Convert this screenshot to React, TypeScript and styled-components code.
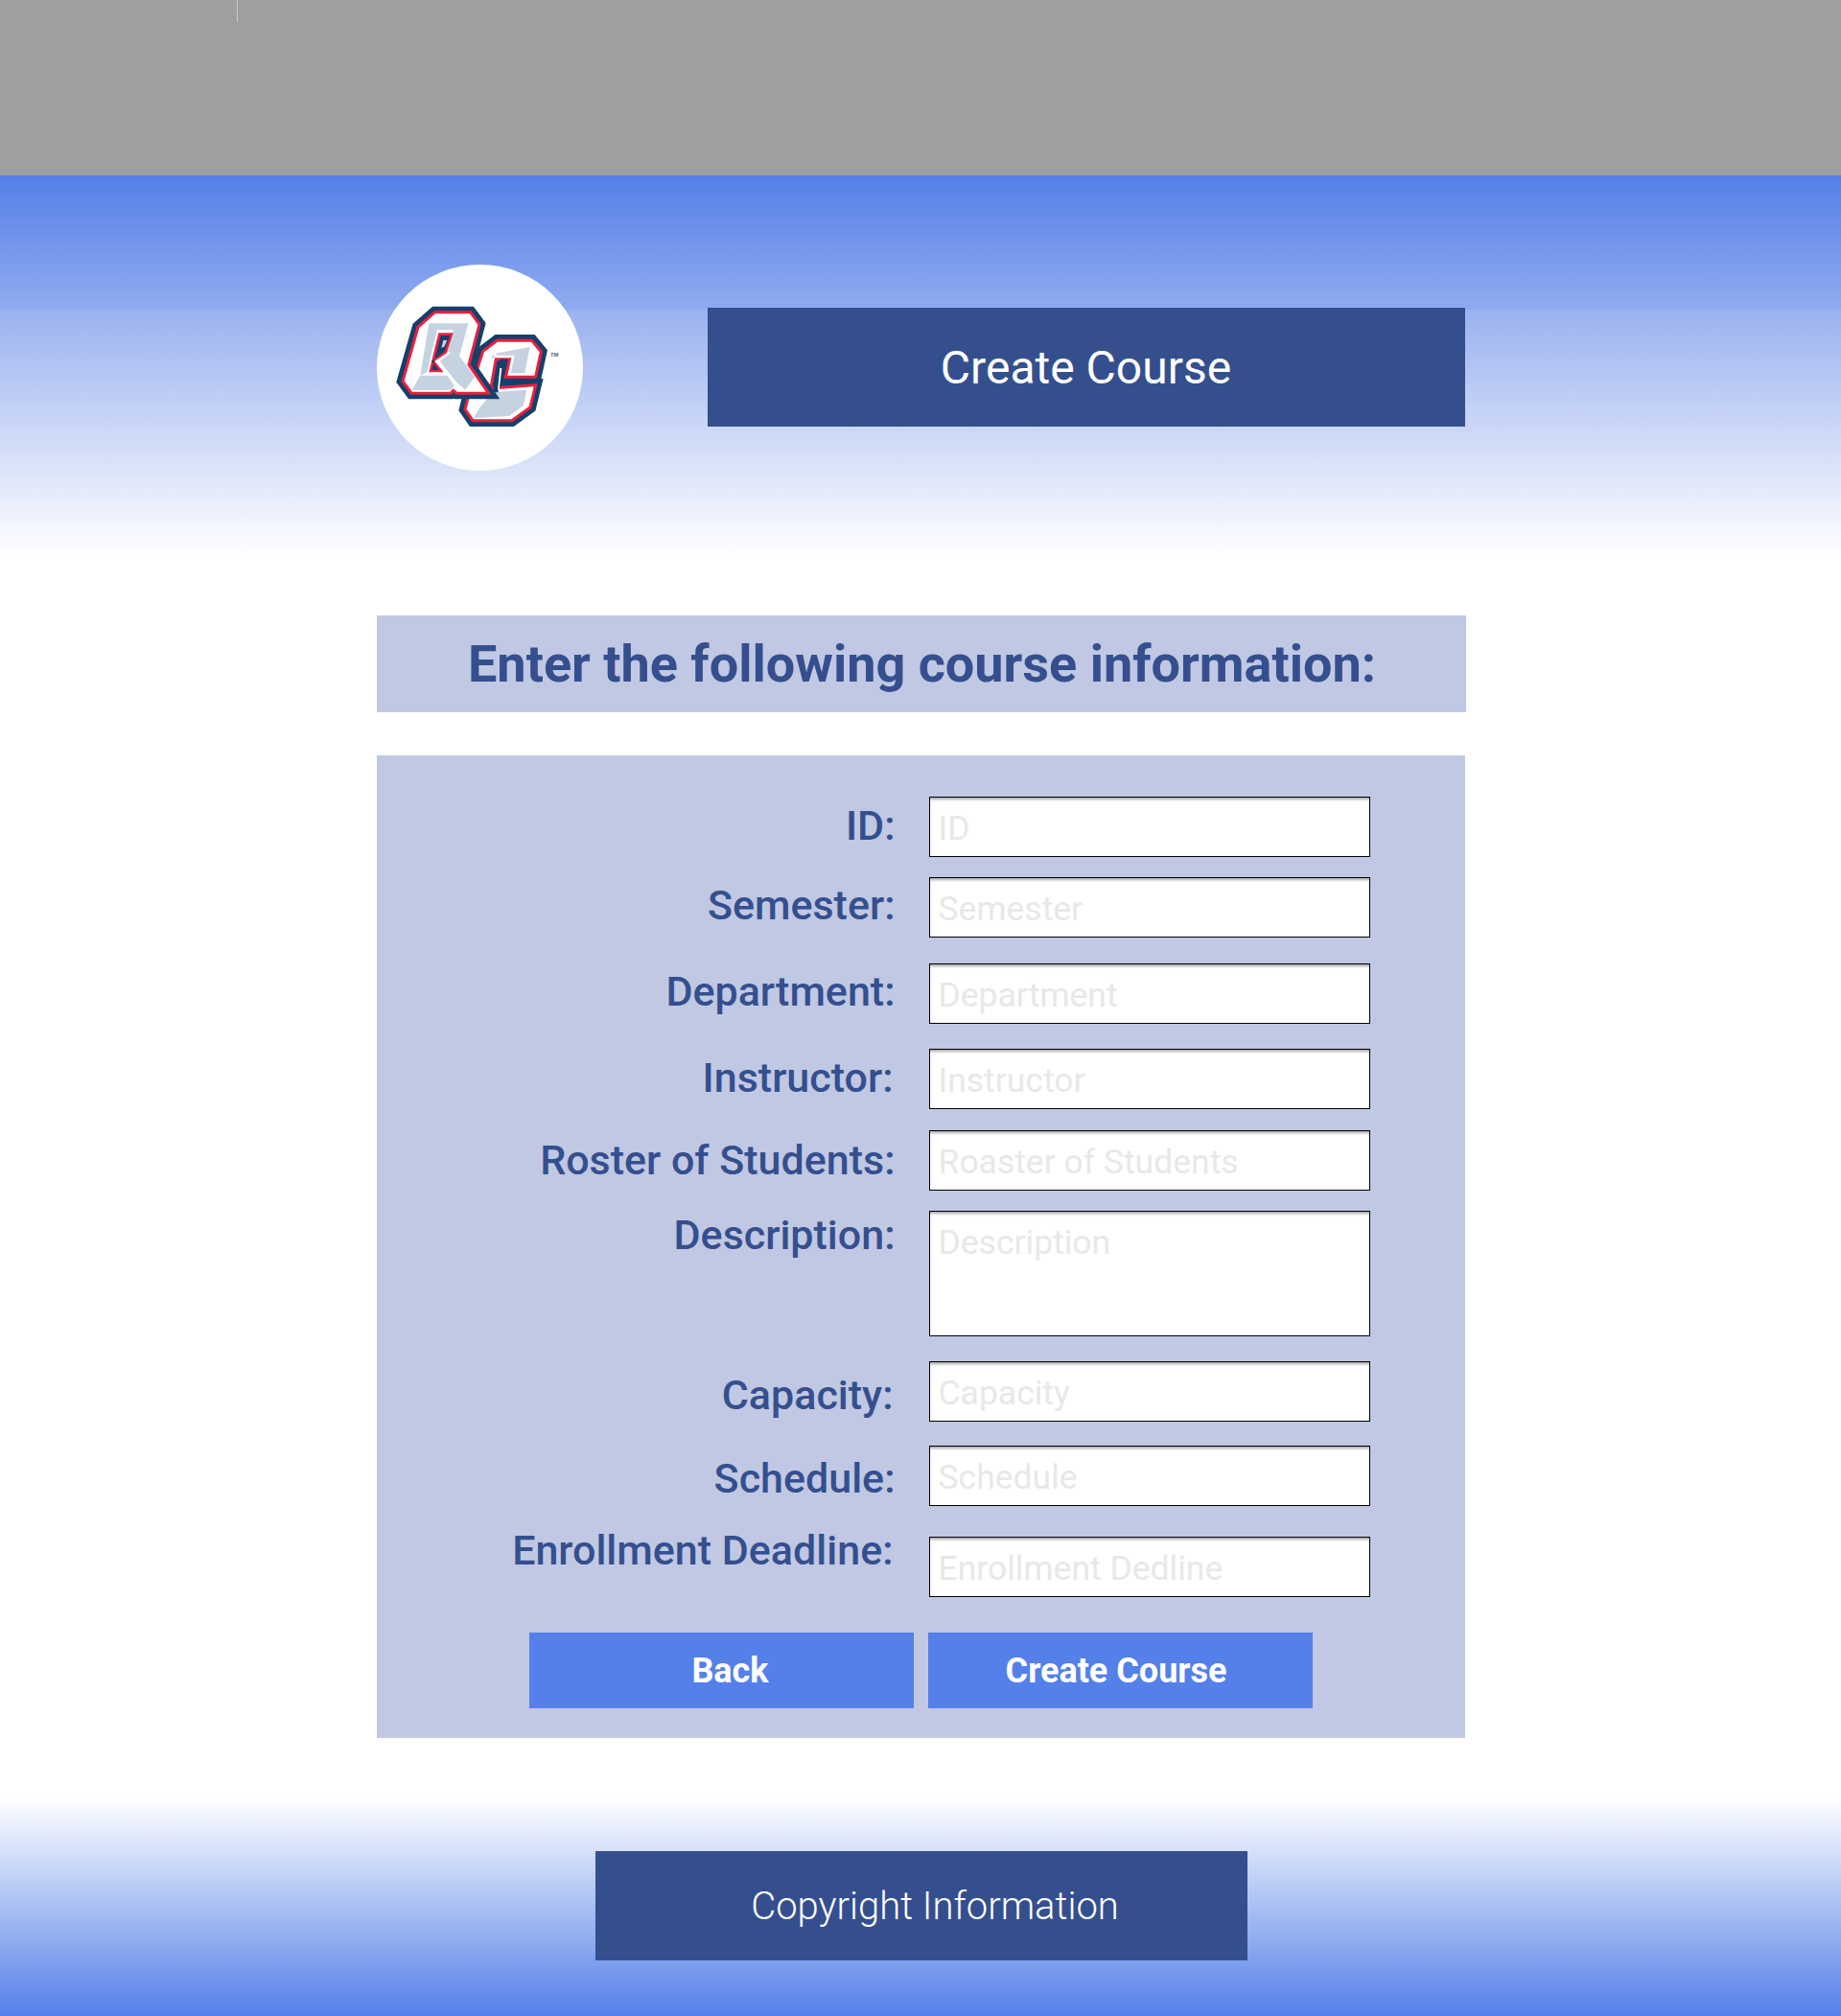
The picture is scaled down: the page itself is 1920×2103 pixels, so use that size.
import React from "react";
import styled, { createGlobalStyle } from "styled-components";

const GlobalStyle = createGlobalStyle`
  html, body {
    margin: 0;
    padding: 0;
    background: #ffffff;
    font-family: Roboto, "Liberation Sans", sans-serif;
  }
  * { box-sizing: border-box; }
`;

type Field = {
  label: string;
  placeholder: string;
  top: number;
  labelTop: number;
  labelRight?: number;
  multiline?: boolean;
};

const fields: Field[] = [
  { label: "ID:", placeholder: "ID", top: 0, labelTop: 5 },
  { label: "Semester:", placeholder: "Semester", top: 21, labelTop: 4 },
  { label: "Department:", placeholder: "Department", top: 27, labelTop: 4 },
  { label: "Instructor:", placeholder: "Instructor", top: 26, labelTop: 5, labelRight: 2 },
  { label: "Roster of Students:", placeholder: "Roaster of Students", top: 22, labelTop: 6 },
  { label: "Description:", placeholder: "Description", top: 21, labelTop: 0, multiline: true },
  { label: "Capacity:", placeholder: "Capacity", top: 26, labelTop: 10, labelRight: 2 },
  { label: "Schedule:", placeholder: "Schedule", top: 25, labelTop: 9 },
  { label: "Enrollment Deadline:", placeholder: "Enrollment Dedline", top: 32, labelTop: -11, labelRight: 2 },
];

const NAVY = "#173f6b";
const RED = "#e8213f";
const STEEL = "#c5d3e0";

function Logo() {
  const q = "M202 246 L252 202 L360 202 L385 236 L352 362 L410 446 L320 446 L308 436 L298 446 L180 446 L155 412 Z";
  const c =
    "M405 322 L447 290 L552 290 L578 322 L562 395 L478 395 L490 340 L438 340 L420 440 L560 430 L545 492 L490 532 L372 532 L350 500 L360 460 Z";
  return (
    <svg width="215" height="215" viewBox="69 48 645 645" aria-label="QC logo">
      <path d={c} fill="#fff" stroke={NAVY} strokeWidth="46" strokeLinejoin="miter" />
      <path d={c} fill="#fff" stroke={RED} strokeWidth="18" strokeLinejoin="miter" />
      <path d={c} fill="#fff" />
      <polygon points="428,345 447,325 548,306 532,388 488,388 500,332 430,332" fill={STEEL} />
      <polygon points="372,528 392,494 432,448 538,440 528,488 484,522" fill={STEEL} />
      <polygon points="455,344 480,344 462,392 448,448 432,448" fill={NAVY} />
      <polygon points="454,372 460,372 452,440 447,440" fill="#ffffff" />
      <path d={q} fill="#fff" stroke={NAVY} strokeWidth="46" strokeLinejoin="miter" />
      <path d={q} fill="#fff" stroke={RED} strokeWidth="18" strokeLinejoin="miter" />
      <path d={q} fill="#fff" />
      <polygon points="232,232 355,232 326,340 292,320 308,252 258,252 226,385 205,395" fill={STEEL} />
      <polygon points="178,441 205,395 290,395 312,428 298,441" fill={STEEL} />
      <polygon points="300,325 328,335 376,400 345,440 318,416 266,350" fill={STEEL} />
      <polygon points="262,262 308,262 288,325 250,350 278,385 232,385" fill={RED} />
      <polygon points="269,270 298,270 281,320 240,350 264,378 241,378" fill={NAVY} />
      <polygon points="277,285 289,285 280,305 271,308" fill={STEEL} />
      <text x="612" y="335" fontSize="17" fontStyle="italic" fontWeight="700" fill="#54657a" fontFamily="Roboto, sans-serif">
        TM
      </text>
    </svg>
  );
}

export default function App() {
  return (
    <>
      <GlobalStyle />
      <Page>
        <TopBar>
          <TopTick />
        </TopBar>
        <Header>
          <HeaderInner>
            <LogoCircle>
              <Logo />
            </LogoCircle>
            <TitleBar>Create Course</TitleBar>
          </HeaderInner>
        </Header>
        <Main>
          <Heading>Enter the following course information:</Heading>
          <FormPanel>
            {fields.map((f) => (
              <Row key={f.label} $top={f.top}>
                <Label $top={f.labelTop} $right={f.labelRight ?? 0}>
                  {f.label}
                </Label>
                {f.multiline ? (
                  <TextBox placeholder={f.placeholder} />
                ) : (
                  <TextInput placeholder={f.placeholder} />
                )}
              </Row>
            ))}
            <ButtonRow>
              <ActionButton type="button" $left={19} $right={0}>
                Back
              </ActionButton>
              <ActionButton type="button" $left={0} $right={8}>
                Create Course
              </ActionButton>
            </ButtonRow>
          </FormPanel>
        </Main>
        <Footer>
          <FooterBar>Copyright Information</FooterBar>
        </Footer>
      </Page>
    </>
  );
}

const Page = styled.div`
  width: 1920px;
  height: 2103px;
  background: #ffffff;
  overflow: hidden;
`;

const TopBar = styled.div`
  position: relative;
  height: 183px;
  background: #9f9f9f;
`;

const TopTick = styled.span`
  position: absolute;
  left: 247px;
  top: 0;
  width: 1px;
  height: 23px;
  background: #c6c6c6;
`;

const Header = styled.header`
  height: 397px;
  background: linear-gradient(
    180deg,
    #5580e9 0,
    #90abef 140px,
    #9bb2f0 140px,
    #ffffff 100%
  );
`;

const HeaderInner = styled.div`
  width: 1135px;
  margin: 0 auto;
  display: flex;
  align-items: flex-start;
`;

const LogoCircle = styled.div`
  width: 215px;
  height: 215px;
  margin-top: 93px;
  border-radius: 50%;
  background: #ffffff;
  overflow: hidden;
  flex-shrink: 0;
`;

const TitleBar = styled.div`
  width: 790px;
  height: 124px;
  margin: 138px 0 0 130px;
  display: flex;
  align-items: center;
  justify-content: center;
  background: #354f8e;
  color: #ffffff;
  font-size: 48px;
  font-weight: 400;
`;

const Main = styled.main`
  width: 1135px;
  margin: 62px auto 0;
`;

const Heading = styled.h1`
  width: 1136px;
  height: 101px;
  margin: 0;
  padding-left: 2px;
  display: flex;
  align-items: center;
  justify-content: center;
  background: #c0c8e4;
  color: #354f8e;
  font-size: 54px;
  font-weight: 700;
`;

const FormPanel = styled.section`
  margin-top: 45px;
  height: 1025px;
  padding-top: 43px;
  background: #c0c8e4;
`;

const Row = styled.div<{ $top: number }>`
  display: flex;
  align-items: flex-start;
  margin-top: ${(p) => p.$top}px;
`;

const Label = styled.label<{ $top: number; $right: number }>`
  width: 576px;
  height: 50px;
  line-height: 50px;
  padding-right: ${(p) => 35 + p.$right}px;
  margin-top: ${(p) => p.$top}px;
  margin-bottom: ${(p) => -p.$top}px;
  text-align: right;
  color: #354f8e;
  font-size: 43px;
  font-weight: 500;
  white-space: nowrap;
`;

const fieldStyles = `
  width: 460px;
  display: block;
  padding: 2px 9px 0;
  border: 1px solid #000000;
  border-radius: 0;
  outline: none;
  background: #ffffff;
  box-shadow: inset 0 4px 3px -2px rgba(0, 0, 0, 0.35);
  font-family: Roboto, "Liberation Sans", sans-serif;
  font-size: 35.5px;
  color: #333333;
  resize: none;

  &::placeholder {
    color: #e8e8e8;
    opacity: 1;
  }
`;

const TextInput = styled.input`
  ${fieldStyles}
  height: 63px;
`;

const TextBox = styled.textarea`
  ${fieldStyles}
  height: 131px;
  padding-top: 11px;
  overflow: hidden;
`;

const ButtonRow = styled.div`
  display: flex;
  gap: 15px;
  margin: 37px 0 0 159px;
`;

const ActionButton = styled.button<{ $left: number; $right: number }>`
  width: 401px;
  height: 79px;
  padding: 0 ${(p) => p.$right}px 0 ${(p) => p.$left}px;
  border: none;
  background: #5580e9;
  color: #ffffff;
  font-family: Roboto, "Liberation Sans", sans-serif;
  font-size: 36px;
  font-weight: 700;
`;

const Footer = styled.footer`
  height: 228px;
  margin-top: 62px;
  padding-top: 56px;
  background: linear-gradient(180deg, #ffffff 0, #5580e9 100%);
`;

const FooterBar = styled.div`
  width: 680px;
  height: 114px;
  margin-left: 621px;
  padding-left: 28px;
  display: flex;
  align-items: center;
  justify-content: center;
  background: #354f8e;
  color: #ffffff;
  font-size: 40px;
  font-weight: 300;
`;
